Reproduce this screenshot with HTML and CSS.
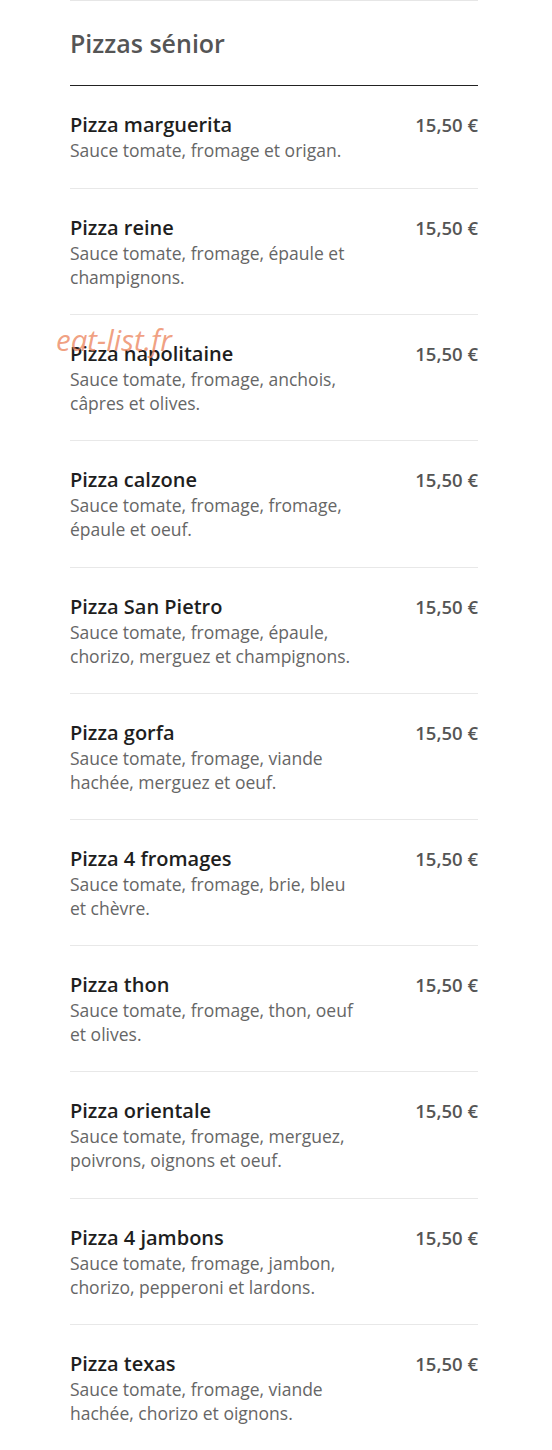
FILE: index.html
```html
<!DOCTYPE html>
<html>
<head>
<meta charset="UTF-8">
<title>Pizzas sénior</title>
<link rel="stylesheet" href="styles.css">
</head>
<body>
<div class="menu">
    <h2 class="section-title">Pizzas sénior</h2>
    <div class="item">
        <div class="info"><div class="name">Pizza marguerita</div><div class="desc">Sauce tomate, fromage et origan.</div></div>
        <div class="price">15,50 €</div>
    </div>
    <div class="item">
        <div class="info"><div class="name">Pizza reine</div><div class="desc">Sauce tomate, fromage, épaule et champignons.</div></div>
        <div class="price">15,50 €</div>
    </div>
    <div class="item">
        <div class="info"><div class="name">Pizza napolitaine</div><div class="desc">Sauce tomate, fromage, anchois, câpres et olives.</div></div>
        <div class="price">15,50 €</div>
        <span class="watermark">eat-list.fr</span>
    </div>
    <div class="item">
        <div class="info"><div class="name">Pizza calzone</div><div class="desc">Sauce tomate, fromage, fromage, épaule et oeuf.</div></div>
        <div class="price">15,50 €</div>
    </div>
    <div class="item">
        <div class="info"><div class="name">Pizza San Pietro</div><div class="desc">Sauce tomate, fromage, épaule, chorizo, merguez et champignons.</div></div>
        <div class="price">15,50 €</div>
    </div>
    <div class="item">
        <div class="info"><div class="name">Pizza gorfa</div><div class="desc">Sauce tomate, fromage, viande hachée, merguez et oeuf.</div></div>
        <div class="price">15,50 €</div>
    </div>
    <div class="item">
        <div class="info"><div class="name">Pizza 4 fromages</div><div class="desc">Sauce tomate, fromage, brie, bleu et chèvre.</div></div>
        <div class="price">15,50 €</div>
    </div>
    <div class="item">
        <div class="info"><div class="name">Pizza thon</div><div class="desc">Sauce tomate, fromage, thon, oeuf et olives.</div></div>
        <div class="price">15,50 €</div>
    </div>
    <div class="item">
        <div class="info"><div class="name">Pizza orientale</div><div class="desc">Sauce tomate, fromage, merguez, poivrons, oignons et oeuf.</div></div>
        <div class="price">15,50 €</div>
    </div>
    <div class="item">
        <div class="info"><div class="name">Pizza 4 jambons</div><div class="desc">Sauce tomate, fromage, jambon, chorizo, pepperoni et lardons.</div></div>
        <div class="price">15,50 €</div>
    </div>
    <div class="item">
        <div class="info"><div class="name">Pizza texas</div><div class="desc">Sauce tomate, fromage, viande hachée, chorizo et oignons.</div></div>
        <div class="price">15,50 €</div>
    </div>
</div>
</body>
</html>
```

FILE: styles.css
```css
html, body {
    margin: 0;
    background: #fff;
    font-family: "Open Sans", "Liberation Sans", sans-serif;
}
.menu {
    width: 408px;
    margin-left: 70px;
    border-top: 1px solid #e6e6e6;
}
.section-title {
    margin: 0;
    padding: 28px 0 27px;
    font-size: 25px;
    line-height: 29px;
    font-weight: 600;
    color: #555;
    border-bottom: 1px solid #222;
}
.item {
    position: relative;
    display: flex;
    justify-content: space-between;
    align-items: flex-start;
    padding: 26px 0 25.2px;
}
.item:first-of-type {
    padding-bottom: 26px;
}
.item + .item {
    border-top: 1px solid #e8e8e8;
}
.info {
    width: 292px;
}
.name {
    font-size: 20px;
    line-height: 26px;
    font-weight: 600;
    color: #1e1e1e;
}
.desc {
    font-size: 17.5px;
    line-height: 24px;
    color: #666;
}
.price {
    font-size: 18.5px;
    line-height: 25px;
    font-weight: 600;
    color: #555;
}
.watermark {
    position: absolute;
    left: -14px;
    top: 4px;
    font-size: 29.5px;
    font-style: italic;
    color: rgba(236, 130, 90, 0.75);
    pointer-events: none;
}
```
